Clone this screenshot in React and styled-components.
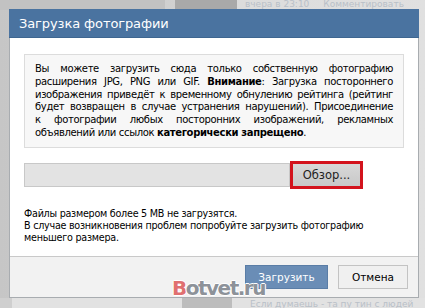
import React from "react";
import styled, { createGlobalStyle } from "styled-components";

const Global = createGlobalStyle`
  html, body { margin: 0; padding: 0; }
  body { width: 425px; height: 308px; overflow: hidden; background: #dcdcdc; }
`;

const Page = styled.div`
  position: relative;
  width: 425px;
  height: 308px;
  overflow: hidden;
  background: linear-gradient(90deg, #c6c6c6 0px, #d0d0d0 170px, #dcdcdc 240px, #e0e0e0 425px);
  font-family: "DejaVu Sans", Verdana, sans-serif;
`;

const BgTop = styled.div`
  display: flex;
  align-items: flex-start;
  height: 10px;
`;

const BgPhoto = styled.div`
  width: ${(p) => p.$w}px;
  height: 10px;
  margin-left: ${(p) => p.$ml || 0}px;
  background: ${(p) => p.$c};
`;

const BgText = styled.span`
  font-family: "DejaVu Sans", sans-serif;
  font-size: 9px;
  color: #b9c0c8;
  line-height: 8px;
  margin-left: ${(p) => p.$ml}px;
  white-space: nowrap;
`;

const BgBottom = styled.div`
  position: absolute;
  left: 0;
  right: 0;
  bottom: 0;
  height: 10px;
  display: flex;
  align-items: flex-end;
  background: #e2e2e2;
`;

const Dialog = styled.div`
  position: absolute;
  left: 9px;
  top: 9px;
  width: 408px;
  height: 288px;
  border: 1px solid #a8acb0;
  border-top: none;
  background: #fff;
  display: flex;
  flex-direction: column;
`;

const Header = styled.div`
  height: 28px;
  background: #4a73a0;
  border-bottom: 1px solid #3e6690;
  display: flex;
  align-items: center;
  padding-left: 10px;
  color: #fff;
  font-family: "DejaVu Sans", sans-serif;
  font-size: 13px;
  letter-spacing: -0.1px;
  margin: 0 -1px;
`;

const Body = styled.div`
  flex: 1;
  padding: 16px 14px 0 14px;
  display: flex;
  flex-direction: column;
`;

const InfoBox = styled.div`
  background: #f7f7f7;
  border: 1px solid #dcdcdc;
  padding: 8px 10px 7px 10px;
  font-size: 10px;
  line-height: 12.8px;
  color: #000;
  text-align: justify;
  letter-spacing: -0.35px;
`;

const FileRow = styled.div`
  display: flex;
  align-items: center;
  margin-top: 13px;
  height: 28px;
`;

const FileField = styled.div`
  width: 266px;
  height: 24px;
  background: #e3e3e3;
  border: 1px solid #c8c8c8;
  box-sizing: border-box;
`;

const BrowseButton = styled.div`
  width: 73px;
  height: 28px;
  box-sizing: border-box;
  border: 3px solid #d3131d;
  background: linear-gradient(#d8d8d8, #c8c8c8);
  display: flex;
  align-items: center;
  justify-content: center;
  font-family: "DejaVu Sans", sans-serif;
  font-size: 11.5px;
  color: #222;
  padding-top: 1px;
`;

const Notes = styled.div`
  margin-top: 19px;
  font-size: 9.6px;
  line-height: 12px;
  color: #000;
  letter-spacing: -0.25px;
`;

const Footer = styled.div`
  height: 40px;
  background: #f2f2f2;
  border-top: 1px solid #c9c9c9;
  display: flex;
  align-items: center;
  justify-content: flex-end;
  gap: 10px;
  padding-right: 10px;
`;

const Button = styled.div`
  width: ${(p) => p.$w}px;
  height: 24px;
  box-sizing: border-box;
  display: flex;
  align-items: center;
  justify-content: center;
  font-family: "DejaVu Sans", sans-serif;
  font-size: 10.5px;
  background: ${(p) => (p.$primary ? "#6a8db6" : "#f0f0f0")};
  border: 1px solid ${(p) => (p.$primary ? "#5a7da6" : "#c3c3c3")};
  color: ${(p) => (p.$primary ? "#fff" : "#000")};
`;

const Watermark = styled.div`
  position: absolute;
  left: 172px;
  top: 277px;
  font-family: "DejaVu Sans", sans-serif;
  font-size: 20px;
  line-height: 22px;
  font-weight: bold;
  letter-spacing: -1.5px;
  color: #8d9299;
  text-shadow: 1px 0 #fff, -1px 0 #fff, 0 1px #fff, 0 -1px #fff;
`;

const WmB = styled.span`
  color: #e07070;
`;

export default function App() {
  return (
    <Page>
      <Global />
      <BgTop>
        <BgPhoto $w={165} $c="#c2c2c2" />
        <BgPhoto $w={62} $ml={10} $c="#a9a9a9" />
        <BgText $ml={8}>вчера в 23:10</BgText>
        <BgText $ml={14}>Комментировать</BgText>
      </BgTop>
      <BgBottom>
        <BgPhoto $w={12} $ml={0} $c="#cfcfcf" />
        <BgPhoto $w={50} $ml={170} $c="#bdbdbd" />
        <BgText $ml={18}>Если думаешь - та пу тин с людей</BgText>
      </BgBottom>
      <Dialog>
        <Header>Загрузка фотографии</Header>
        <Body>
          <InfoBox>
            Вы можете загрузить сюда только собственную фотографию расширения
            JPG, PNG или GIF. <b>Внимание</b>: Загрузка постороннего изображения
            приведёт к временному обнулению рейтинга (рейтинг будет возвращен в
            случае устранения нарушений). Присоединение к{"\u00a0"}фотографии любых
            посторонних изображений, рекламных объявлений или ссылок{" "}
            <b>категорически запрещено</b>.
          </InfoBox>
          <FileRow>
            <FileField />
            <BrowseButton>Обзор...</BrowseButton>
          </FileRow>
          <Notes>
            Файлы размером более 5 MB не загрузятся.
            <br />
            В случае возникновения проблем попробуйте загрузить фотографию
            меньшего размера.
          </Notes>
        </Body>
        <Footer>
          <Button $primary $w={83}>Загрузить</Button>
          <Button $w={70}>Отмена</Button>
        </Footer>
      </Dialog>
      <Watermark>
        <WmB>B</WmB>otvet.ru
      </Watermark>
    </Page>
  );
}
